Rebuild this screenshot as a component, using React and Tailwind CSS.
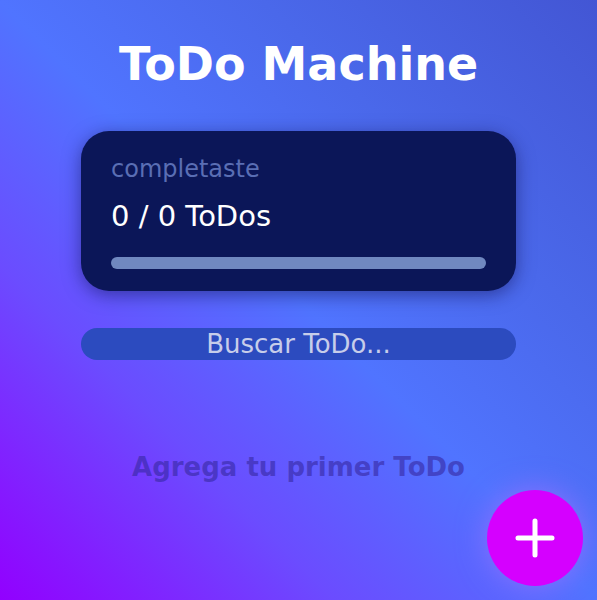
import React, { useState } from 'react';

const font = { fontFamily: '"DejaVu Sans", "Open Sans", sans-serif' };

const TodoCounter = ({ completed, total }) => (
  <div className="w-[435px] h-[160px] rounded-[28px] bg-[#0b1658] shadow-[0_4px_18px_rgba(20,20,90,0.55)] px-[30px] pt-[24px]">
    <p className="text-[24px] leading-[28px] text-[#5a6eb4]">completaste</p>
    <p className="mt-[15px] text-[29px] leading-[36px] text-white">
      {completed} / {total} ToDos
    </p>
    <div className="mt-[23px] h-[12px] w-full rounded-full bg-[#7088c0]" />
  </div>
);

const TodoSearch = ({ value, onChange }) => (
  <input
    value={value}
    onChange={(e) => onChange(e.target.value)}
    placeholder="Buscar ToDo..."
    className="mt-[37px] w-[435px] h-[32px] rounded-full bg-[#2c4bbf] text-center text-[26px] leading-[32px] text-[#d0d5ee] placeholder:text-[#c7cdea] outline-none border-0"
    style={font}
  />
);

export default function App() {
  const [search, setSearch] = useState('');

  return (
    <div
      className="relative w-full h-[600px] overflow-hidden bg-[linear-gradient(45deg,#9200ff_0%,#6b4cff_28%,#5074ff_50%,#4a68ea_72%,#4356d4_100%)]"
      style={font}
    >
      <div className="flex flex-col items-center pt-[35px]">
        <h1 className="text-[46px] font-bold leading-[58px] text-white">ToDo Machine</h1>
        <div className="mt-[38px]">
          <TodoCounter completed={0} total={0} />
        </div>
        <TodoSearch value={search} onChange={setSearch} />
        <p className="mt-[90px] text-[26px] leading-[34px] font-bold text-[#36289f]/60">Agrega tu primer ToDo</p>
      </div>

      {/* boton flotante */}
      <button className="absolute left-[487px] top-[490px] w-[96px] h-[96px] rounded-full bg-[#d500ff] shadow-[0_0_30px_rgba(150,110,255,0.85)] flex items-center justify-center">
        <svg width="42" height="42" viewBox="0 0 42 42" fill="none" stroke="white" strokeWidth="5" strokeLinecap="round">
          <path d="M21 4v34M4 21h34" />
        </svg>
      </button>
    </div>
  );
}
